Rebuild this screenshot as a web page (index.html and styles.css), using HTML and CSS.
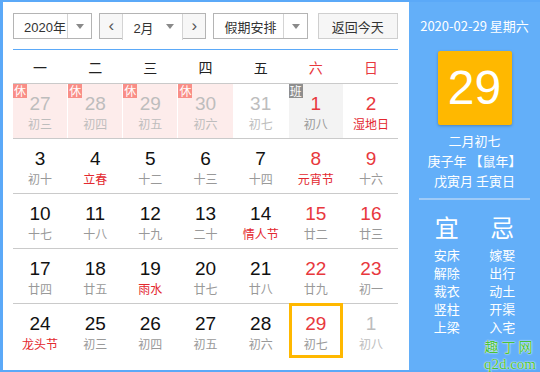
FILE: index.html
```html
<!DOCTYPE html>
<html lang="zh-CN">
<head>
  <meta charset="UTF-8">
  <title>万年历</title>
  <link rel="stylesheet" href="styles.css">
</head>
<body>
  <div class="cal">
    <div class="main">
      <div class="toolbar">
        <div class="select year"><span class="label">2020年</span><span class="arrow"></span></div>
        <div class="month-group">
          <span class="nav">&lsaquo;</span>
          <div class="select month"><span class="label">2月</span><span class="arrow"></span></div>
          <span class="nav">&rsaquo;</span>
        </div>
        <div class="select holiday"><span class="label">假期安排</span><span class="arrow"></span></div>
        <button class="today">返回今天</button>
      </div>

      <div class="week">
        <span>一</span><span>二</span><span>三</span><span>四</span><span>五</span>
        <span class="red">六</span><span class="red">日</span>
      </div>

      <div class="grid" id="grid"></div>
    </div>

    <div class="side">
      <div class="side-date">2020-02-29 星期六</div>
      <div class="big-day">29</div>
      <div class="lunar-info">
        <p>二月初七</p>
        <p>庚子年 【鼠年】</p>
        <p>戊寅月 壬寅日</p>
      </div>
      <div class="advice">
        <ul>
          <li class="head">宜</li>
          <li>安床</li><li>解除</li><li>裁衣</li><li>竖柱</li><li>上梁</li>
        </ul>
        <ul>
          <li class="head">忌</li>
          <li>嫁娶</li><li>出行</li><li>动土</li><li>开渠</li><li>入宅</li>
        </ul>
      </div>
    </div>

    <div class="mark">
      <span class="mark-cn">趣丁网</span>
      <span class="mark-en">q2d.com</span>
    </div>
  </div>

  <script>
    // [日, 农历, 标记]  o=非本月 r=休 w=班 f=节日 s=选中
    const days = [
      [27, '初三', 'o r'], [28, '初四', 'o r'], [29, '初五', 'o r'], [30, '初六', 'o r'], [31, '初七', 'o'], [1, '初八', 'w'], [2, '湿地日', 'f'],
      [3, '初十', ''], [4, '立春', 'f'], [5, '十二', ''], [6, '十三', ''], [7, '十四', ''], [8, '元宵节', 'f'], [9, '十六', ''],
      [10, '十七', ''], [11, '十八', ''], [12, '十九', ''], [13, '二十', ''], [14, '情人节', 'f'], [15, '廿二', ''], [16, '廿三', ''],
      [17, '廿四', ''], [18, '廿五', ''], [19, '雨水', 'f'], [20, '廿七', ''], [21, '廿八', ''], [22, '廿九', ''], [23, '初一', ''],
      [24, '龙头节', 'f'], [25, '初三', ''], [26, '初四', ''], [27, '初五', ''], [28, '初六', ''], [29, '初七', 's'], [1, '初八', 'o']
    ];

    const grid = document.getElementById('grid');
    let html = '';
    days.forEach((d, i) => {
      const flags = d[2].split(' ');
      const cls = ['cell'];
      if (i % 7 >= 5) cls.push('weekend');
      if (flags.includes('o')) cls.push('other');
      if (flags.includes('r')) cls.push('rest');
      if (flags.includes('w')) cls.push('work');
      if (flags.includes('f')) cls.push('fest');
      if (flags.includes('s')) cls.push('selected');
      let badge = '';
      if (flags.includes('r')) badge = '<i class="badge">休</i>';
      if (flags.includes('w')) badge = '<i class="badge">班</i>';
      html += `<div class="${cls.join(' ')}">${badge}<b>${d[0]}</b><em>${d[1]}</em></div>`;
      if (i % 7 === 6 && i < days.length - 1) html += '<hr class="line">';
    });
    grid.innerHTML = html;
  </script>
</body>
</html>
```

FILE: styles.css
```css
* { box-sizing: border-box; }
body { margin: 0; font-family: "Liberation Sans", "Noto Sans CJK SC", sans-serif; }

.cal { position: relative; width: 540px; height: 372px; display: flex; background: #5ba9f8; padding: 2px 0 2px 3px; }

.main { width: 406px; background: #fff; padding: 11px 11px 0 10px; }

.toolbar { display: flex; height: 26px; font-size: 13px; color: #333; }
.select { display: flex; align-items: center; height: 26px; border: 1px solid #b4b4b4; background: #fff; }
.select .label { flex: 1; padding-left: 10px; }
.select .arrow { width: 24px; height: 100%; border-left: 1px solid #d4d4d4; position: relative; }
.select .arrow::after { content: ""; position: absolute; left: 8px; top: 10px; border: 4px solid transparent; border-top: 5px solid #8a8a8a; border-bottom: 0; }
.year { width: 80px; }
.month-group { display: flex; margin-left: 7px; height: 26px; border: 1px solid #b4b4b4; }
.month-group .nav { width: 22px; display: flex; align-items: center; justify-content: center; background: #f7f7f7; font-size: 17px; color: #555; }
.month-group .month { width: 61px; border-width: 0 1px; border-color: #d4d4d4; }
.month-group .month .arrow { border-left: 0; }
.holiday { width: 95px; margin-left: 7px; }
.today { margin-left: 10px; width: 81px; height: 26px; border: 1px solid #cfcfcf; background: #f6f6f6; font: inherit; color: #333; padding: 0; }

.week { display: grid; grid-template-columns: repeat(7, 1fr); column-gap: 1px; margin-top: 10px; border-top: 1px solid #5ba9f8; border-bottom: 1px solid #cacaca; height: 35px; align-items: center; text-align: center; font-family: "Noto Sans CJK SC", sans-serif; font-size: 14px; color: #222; }
.week .red { color: #e8383d; }

.grid { display: grid; grid-template-columns: repeat(7, 1fr); column-gap: 1px; }
.line { grid-column: 1 / -1; margin: 0; border: 0; height: 1px; background: #cacaca; }

.cell { position: relative; height: 54px; display: flex; flex-direction: column; align-items: center; padding-top: 9px; }
.cell b { font-weight: normal; font-size: 19px; line-height: 22px; color: #111; }
.cell em { font-style: normal; font-family: "Noto Sans CJK SC", sans-serif; font-size: 12px; line-height: 18px; color: #999; }
.cell.weekend b { color: #e8383d; }
.cell.fest em { color: #e3282f; }
.cell.other b, .cell.other em { color: #bdbdbd; }
.cell.rest { background: #fdeceb; }
.cell.work { background: #f3f3f3; }
.cell.selected { box-shadow: inset 0 0 0 3px #ffb800; margin-top: -1px; height: 55px; padding-top: 10px; }

.badge { position: absolute; left: 0; top: 0; width: 14px; height: 14px; font-style: normal; font-family: "Noto Sans CJK SC", sans-serif; font-size: 12px; line-height: 14px; text-align: center; color: #fff; background: #f98e87; }
.work .badge { background: #8e8e8e; }

.side { flex: 1; background: #63aff9; color: #fff; padding: 0 10px; font-family: "Noto Sans CJK SC", sans-serif; display: flex; flex-direction: column; align-items: center; }
.side-date { margin-top: 14px; font-size: 13px; line-height: 20px; }
.big-day { margin-top: 15px; width: 74px; height: 74px; background: #ffb800; border-radius: 2px; box-shadow: 0 1px 3px rgba(0, 0, 0, 0.25); font-family: "Liberation Sans", sans-serif; font-size: 48px; line-height: 74px; text-align: center; }
.lunar-info { margin-top: 6px; text-align: center; font-size: 13px; line-height: 20px; }
.lunar-info p { margin: 0; }
.advice { width: 100%; display: flex; margin-top: 7px; padding-top: 13px; border-top: 2px solid #9fcbf8; }
.advice ul { flex: 1; list-style: none; margin: 0; padding: 0; text-align: center; font-size: 13px; line-height: 18px; }
.advice .head { font-size: 24px; line-height: 28px; margin-bottom: 5px; }

.mark { position: absolute; right: 4px; bottom: 0; display: flex; flex-direction: column; align-items: center; color: #49c23a; font-family: "Noto Sans CJK SC", sans-serif; text-shadow: 0 0 2px #fff, 0 0 1px #fff; }
.mark-cn { font-size: 14px; line-height: 20px; letter-spacing: 3px; }
.mark-en { font-family: "Liberation Serif", serif; font-size: 15px; line-height: 16px; }
```
